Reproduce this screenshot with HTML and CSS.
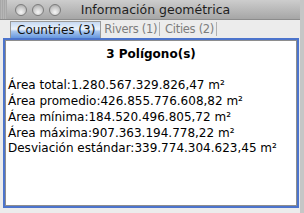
FILE: index.html
```html
<!DOCTYPE html>
<html lang="es">
<head>
  <meta charset="UTF-8" />
  <title>Información geométrica</title>
  <link rel="stylesheet" href="styles.css">
</head>
<body>
  <div class="window">
    <div class="titlebar">
      <div class="grip"></div>
      <div class="lights">
        <span class="light"></span>
        <span class="light"></span>
        <span class="light"></span>
      </div>
      <div class="title">Información geométrica</div>
    </div>
    <div class="tabs">
      <span class="tab active">Countries (3)</span>
      <span class="tab">Rivers (1)</span>
      <span class="tab">Cities (2)</span>
    </div>
    <div class="panel">
      <div class="pane">
        <h2>3 Polígono(s)</h2>
        <p>Área total:1.280.567.329.826,47 m²</p>
        <p>Área promedio:426.855.776.608,82 m²</p>
        <p>Área mínima:184.520.496.805,72 m²</p>
        <p>Área máxima:907.363.194.778,22 m²</p>
        <p>Desviación estándar:339.774.304.623,45 m²</p>
      </div>
    </div>
  </div>
</body>
</html>
```

FILE: styles.css
```css
body {
  margin: 0;
  background: #ececec;
  font-family: "DejaVu Sans", Verdana, sans-serif;
}
.window {
  width: 300px;
  height: 213px;
  border-right: 4px solid #c6c6c6;
  display: flex;
  flex-direction: column;
  background: #ececec;
}
.titlebar {
  height: 19px;
  border-bottom: 1px solid #8c8c8c;
  background: linear-gradient(to bottom, #cdcdcd, #a6a6a6);
  display: flex;
  align-items: center;
  position: relative;
}
.grip {
  align-self: stretch;
  width: 7px;
  background: repeating-linear-gradient(to right, #a8a8a8 0 1px, #b6b6b6 1px 2px);
}
.lights {
  position: absolute;
  left: 15px;
  top: 4px;
  display: flex;
  gap: 5px;
}
.light {
  width: 12px;
  height: 12px;
  border-radius: 50%;
  box-sizing: border-box;
  border: 1px solid #7c7c7c;
  background: radial-gradient(circle at 50% 72%, #f6f6f6, #c8c8c8 55%, #9c9c9c);
}
.title {
  flex: 1;
  text-align: center;
  font-size: 12.5px;
  color: #1e1e1e;
  padding-left: 4px;
}
.tabs {
  height: 17px;
  margin-top: 1px;
  padding-left: 10px;
  display: flex;
  align-items: stretch;
  font-size: 12px;
  color: #7c7c7c;
}
.tab {
  display: flex;
  align-items: center;
  padding: 0 2px 0 5px;
  border-right: 1px solid #b0b0b0;
  margin: 1px 0 2px;
  font-size: 11.5px;
  letter-spacing: -0.3px;
}
.tab.active {
  margin: 0;
  padding: 0 5px 0 6px;
  color: #111;
  font-size: 12px;
  letter-spacing: 0;
  border: 1px solid #9a9a9a;
  border-bottom: 0;
  background: linear-gradient(to bottom, #c6d9f3, #ecf3fc 45%, #aac7ee 58%, #6597df);
}
.tab.active + .tab {
  padding-left: 3px;
}
.panel {
  margin: 0 1px 5px 3px;
  flex: 1;
  border: 2px solid #4c74cc;
  display: flex;
}
.pane {
  flex: 1;
  background: #fff;
  border: 1px solid #8e8e8e;
  padding: 6px 2px;
  font-size: 12px;
  color: #000;
  line-height: 15.7px;
}
h2 {
  margin: 0 0 15.7px;
  text-align: center;
  font-size: 12px;
  font-weight: bold;
}
p {
  margin: 0;
}
```
